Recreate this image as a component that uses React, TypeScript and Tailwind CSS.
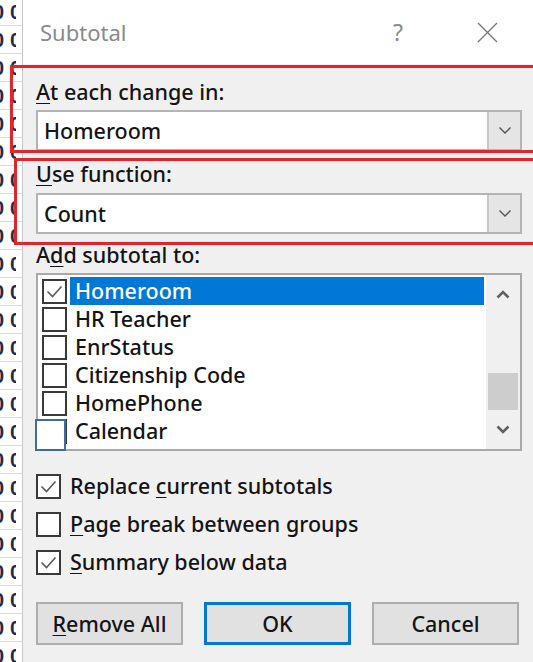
import type { ReactNode } from "react";

const fields = [
  { name: "Homeroom", checked: true },
  { name: "HR Teacher", checked: false },
  { name: "EnrStatus", checked: false },
  { name: "Citizenship Code", checked: false },
  { name: "HomePhone", checked: false },
  { name: "Calendar", checked: false },
];

// mnemonic letter, underlined like a win32 accelerator key
function Key({ children }: { children: ReactNode }) {
  return <span className="underline decoration-1 underline-offset-[3px]">{children}</span>;
}

function Tick() {
  return (
    <svg width="21" height="21" viewBox="0 0 21 21">
      <path d="M3.5 10.5l5 5 9-10" fill="none" stroke="#5a5a5a" strokeWidth="1.6" />
    </svg>
  );
}

function CheckBox({ checked }: { checked: boolean }) {
  return (
    <div className="flex h-[25px] w-[25px] shrink-0 items-center justify-center border-2 border-[#3a3a3a] bg-white">
      {checked && <Tick />}
    </div>
  );
}

function Chevron({ up = false, bold = false }: { up?: boolean; bold?: boolean }) {
  return (
    <svg width="14" height="9" viewBox="0 0 14 9">
      <path
        d={up ? "M1.5 7.5l5.5-5.5 5.5 5.5" : "M1.5 1.5l5.5 5.5 5.5-5.5"}
        fill="none"
        stroke={bold ? "#606060" : "#555"}
        strokeWidth={bold ? 2.6 : 1.4}
      />
    </svg>
  );
}

function Combo({ value }: { value: string }) {
  return (
    <div className="flex h-[41px] border-2 border-[#b4b4b4] bg-white">
      <div className="flex flex-1 items-center pl-[6px]">{value}</div>
      <div className="flex w-[33px] items-center justify-center border-l-2 border-[#c8c8c8] bg-[#e5e5e5]">
        <Chevron />
      </div>
    </div>
  );
}

// the spreadsheet columns peeking out behind the dialog
function SheetEdge() {
  return (
    <div className="-mt-[2px] flex w-[22px] shrink-0 flex-col bg-white">
      {Array.from({ length: 24 }).map((_, i) => (
        <div key={i} className="flex h-[28px] shrink-0 items-center border-b border-[#dcdcdc]">
          <div className="w-[5px] overflow-hidden">
            <span className="-ml-[7px] block font-['Liberation_Sans',sans-serif] text-[20px] font-bold leading-none text-[#1d2b4c]">
              0
            </span>
          </div>
          <div className="ml-[5px] w-[6px] overflow-hidden">
            <span className="block font-['Liberation_Sans',sans-serif] text-[20px] font-bold leading-none text-[#1d2b4c]">
              0
            </span>
          </div>
        </div>
      ))}
    </div>
  );
}

function Scrollbar() {
  return (
    <div className="flex w-[34px] flex-col bg-[#f0f0f0]">
      <div className="flex h-[40px] items-center justify-center">
        <Chevron up bold />
      </div>
      <div className="flex flex-1 flex-col px-[2px]">
        <div className="mt-[58px] h-[37px] bg-[#cdcdcd]" />
      </div>
      <div className="flex h-[40px] items-center justify-center">
        <Chevron bold />
      </div>
    </div>
  );
}

function Button({ children, primary = false }: { children: ReactNode; primary?: boolean }) {
  return (
    <div
      className={
        primary
          ? "flex h-[43px] w-[147px] items-center justify-center border-[3px] border-[#0078d7] bg-[#e1e1e1]"
          : "flex h-[43px] w-[147px] items-center justify-center border-2 border-[#adadad] bg-[#e1e1e1]"
      }
    >
      {children}
    </div>
  );
}

export default function App() {
  return (
    <div className="relative flex h-[662px] w-[533px] overflow-hidden bg-white font-['Noto_Sans',sans-serif] text-[21.5px] font-medium leading-[26px] text-[#141414]">
      <SheetEdge />
      <div className="flex flex-1 flex-col border-l border-[#c6c6c6] bg-[#f0f0f0]">
        <div className="flex h-[64px] items-center bg-white pl-[17px] pr-[31px] font-normal">
          <span className="flex-1 text-[22px] text-[#8a8a8a]">Subtotal</span>
          <span className="w-[30px] text-center text-[23px] text-[#8a8a8a]">?</span>
          <div className="ml-[59px] flex w-[30px] items-center justify-center">
            <svg width="21" height="21" viewBox="0 0 21 21">
              <path d="M1 1l19 19M20 1L1 20" stroke="#7a7a7a" strokeWidth="1.4" />
            </svg>
          </div>
        </div>

        <div className="flex flex-col pl-[13px] pr-[11px]">
          <div className="mt-[15px]">
            <Key>A</Key>t each change in:
          </div>
          <div className="mt-[5px]">
            <Combo value="Homeroom" />
          </div>

          <div className="mt-[10px]">
            <Key>U</Key>se function:
          </div>
          <div className="mt-[6px]">
            <Combo value="Count" />
          </div>

          <div className="mt-[8px]">
            A<Key>d</Key>d subtotal to:
          </div>
          <div className="relative mt-[5px] flex h-[178px] border-2 border-[#a9a9a9] bg-white">
            <div className="flex flex-1 flex-col pl-[4px] pr-[2px] pt-[2px]">
              {fields.map((f, i) => (
                <div key={f.name} className="flex h-[28px] items-center">
                  <CheckBox checked={f.checked} />
                  <div
                    className={
                      i === 0
                        ? "ml-[3px] flex h-full flex-1 items-center bg-[#0078d7] pl-[5px] text-white"
                        : "ml-[3px] flex h-full flex-1 items-center pl-[5px]"
                    }
                  >
                    {f.name}
                  </div>
                </div>
              ))}
            </div>
            <Scrollbar />
            {/* focus box left over on the last row */}
            <div className="absolute -left-[3px] top-[144px] h-[32px] w-[31px] border-2 border-[#3f6c9a] bg-white" />
          </div>

          <div className="mt-[16px] flex flex-col">
            <label className="flex h-[38px] items-center gap-[9px]">
              <CheckBox checked />
              <span>
                Replace <Key>c</Key>urrent subtotals
              </span>
            </label>
            <label className="flex h-[38px] items-center gap-[9px]">
              <CheckBox checked={false} />
              <span>
                <Key>P</Key>age break between groups
              </span>
            </label>
            <label className="flex h-[38px] items-center gap-[9px]">
              <CheckBox checked />
              <span>
                <Key>S</Key>ummary below data
              </span>
            </label>
          </div>

          <div className="mt-[21px] flex gap-[21px]">
            <Button>
              <span>
                <Key>R</Key>emove All
              </span>
            </Button>
            <Button primary>OK</Button>
            <Button>Cancel</Button>
          </div>
        </div>
      </div>

      {/* red callout frames drawn over the dialog */}
      <div className="pointer-events-none absolute left-[10px] top-[65px] h-[88px] w-[540px] border-[3px] border-[#e3242b]" />
      <div className="pointer-events-none absolute left-[14px] top-[158px] h-[87px] w-[540px] border-[3px] border-[#e3242b]" />
    </div>
  );
}
